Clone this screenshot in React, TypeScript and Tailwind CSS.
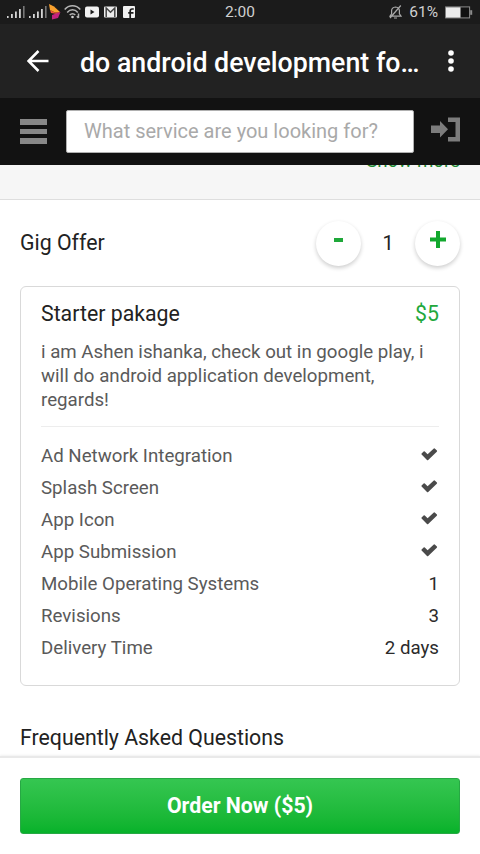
import { JSX } from "react";

interface Feature {
  label: string;
  value?: string;
}

const features: Feature[] = [
  { label: "Ad Network Integration" },
  { label: "Splash Screen" },
  { label: "App Icon" },
  { label: "App Submission" },
  { label: "Mobile Operating Systems", value: "1" },
  { label: "Revisions", value: "3" },
  { label: "Delivery Time", value: "2 days" },
];

const SignalIcon = () => (
  <svg width="18" height="12" viewBox="0 0 18 12" fill="#d4d4d4">
    <rect x="0" y="10" width="1.6" height="2" />
    <rect x="4" y="8" width="1.8" height="4" />
    <rect x="8" y="5.5" width="1.8" height="6.5" />
    <rect x="12" y="3" width="1.8" height="9" />
    <rect x="16" y="0" width="1.6" height="12" opacity="0.5" />
  </svg>
);

const CheckIcon = () => (
  <svg width="17" height="13" viewBox="0 0 17 13" className="-mt-1 mr-px">
    <path
      d="M0.6 5.4 2.6 3.4Q3.2 2.9 3.8 3.5L6.6 6.2 12.8 0.6Q13.4 0.1 14 0.7L15.9 2.6Q16.4 3.2 15.8 3.8L7.2 12.1Q6.6 12.6 6 12L0.6 6.6Q0.1 6 0.6 5.4Z"
      fill="#4a4a4a"
    />
  </svg>
);

const StatusBar = () => (
  <div className="flex h-6 shrink-0 items-center bg-[#1b1b1b] pl-[7px] pr-[7px] text-[#d0d0d0]">
    <div className="flex w-[218px] items-center">
      <SignalIcon />
      <div className="ml-[4px]">
        <SignalIcon />
      </div>
      {/* carrier logo */}
      <svg width="12" height="16" viewBox="0 0 12 16" className="ml-[2px]">
        <path d="M0 0 5 2.5 11 8 6 8.5 1 6Z" fill="#f9a12e" />
        <path d="M1 6 6 8.5 11 8 8 10 2 9Z" fill="#ef5a35" />
        <path d="M11.5 8 9 14 3 15.5 3 11 7 9.5Z" fill="#c2227e" />
      </svg>
      <svg
        width="17"
        height="14"
        viewBox="0 0 17 14"
        fill="none"
        stroke="#b5b5b5"
        strokeWidth="1.5"
        className="ml-[3px]"
      >
        <path d="M0.7 4.6C5 -0.4 12 -0.4 16.3 4.6" />
        <path d="M3.2 7.4C6.2 4 10.8 4 13.8 7.4" />
        <path d="M5.7 10C7.4 8.2 9.6 8.2 11.3 10" />
        <circle cx="8.5" cy="12" r="1.3" fill="#d4d4d4" stroke="none" />
        <path d="M14.5 8.5V13M12.8 11.3 14.5 13" />
      </svg>
      <svg width="14" height="12" viewBox="0 0 14 12" className="ml-[4px]">
        <rect y="0.5" width="14" height="11" rx="2" fill="#f2f2f2" />
        <path d="M5.5 3.6V8.4L9.5 6Z" fill="#1b1b1b" />
      </svg>
      <svg width="13" height="12" viewBox="0 0 13 12" className="ml-[5px]">
        <rect y="0.5" width="13" height="11" rx="1" fill="#ececec" />
        <path
          d="M2.2 11V2L6.5 6.2 10.8 2V11"
          fill="none"
          stroke="#444444"
          strokeWidth="1.5"
        />
      </svg>
      <svg width="12" height="12" viewBox="0 0 12 12" className="ml-[6px]">
        <rect width="12" height="12" rx="1" fill="#f2f2f2" />
        <path
          d="M7.2 12V5.2Q7.2 3 9.2 3H10.8M5.2 6.8H10.5"
          fill="none"
          stroke="#1b1b1b"
          strokeWidth="1.7"
        />
      </svg>
    </div>
    <span className="mt-px text-[15.5px]">2:00</span>
    <div className="ml-auto flex items-center">
      <svg
        width="13"
        height="14"
        viewBox="0 0 13 14"
        fill="none"
        stroke="#aaaaaa"
        strokeWidth="1.2"
      >
        <path d="M1 11.2H12L10.4 8.8V5.6Q10.2 2.4 6.5 2Q2.8 2.4 2.6 5.6V8.8ZM5 13H8M11.8 0.5 1 13" />
      </svg>
      <span className="ml-[7px] mt-px text-[15.5px]">61%</span>
      <svg width="28" height="13" viewBox="0 0 28 13" className="ml-[7px]">
        <rect
          x="0.6"
          y="0.9"
          width="24"
          height="11"
          fill="#111111"
          stroke="#8c8c8c"
        />
        <rect x="1" y="1.3" width="14.5" height="10.3" fill="#ececec" />
        <rect x="25.2" y="4.2" width="2" height="4.6" fill="#8c8c8c" />
      </svg>
    </div>
  </div>
);

const Toolbar = () => (
  <header className="flex h-[74px] shrink-0 items-center bg-[#222222] pl-[27px] pr-[26px] text-white">
    <svg
      width="22"
      height="22"
      viewBox="0 0 22 22"
      fill="none"
      stroke="currentColor"
      strokeWidth="2.5"
    >
      <path d="M21.5 11H2M11.5 1 1.6 11 11.5 21" />
    </svg>
    <h1 className="ml-[31px] mt-[4px] whitespace-nowrap text-[26.75px] font-medium leading-8">
      do android development fo…
    </h1>
    <svg
      width="6"
      height="22"
      viewBox="0 0 6 22"
      fill="currentColor"
      className="ml-auto"
    >
      <circle cx="3" cy="3" r="2.8" />
      <circle cx="3" cy="11" r="2.8" />
      <circle cx="3" cy="19" r="2.8" />
    </svg>
  </header>
);

const SearchBar = () => (
  <div className="flex h-[67px] shrink-0 items-center bg-[#121212] pl-5 pr-5">
    <div className="flex w-[27px] flex-col gap-1">
      <div className="h-1.5 bg-[#888888]" />
      <div className="h-[5px] bg-[#888888]" />
      <div className="h-1.5 bg-[#888888]" />
    </div>
    <div className="-mt-px ml-[19px] flex h-[43px] w-[348px] items-center rounded-xs border border-[#b0b0b0] bg-white pl-[17px] text-[20px] text-[#a9a9a9]">
      What service are you looking for?
    </div>
    <svg
      width="30"
      height="25"
      viewBox="0 0 30 25"
      fill="#7c7c7c"
      className="-mt-1 ml-auto"
    >
      <path d="M1 8.5H10V4L18 12.3 10 20.5V16H1Z" />
      <path d="M18 0.5H30V24.5H18V20H25.5V5H18Z" />
    </svg>
  </div>
);

const GigOffer = () => (
  <section className="px-5">
    <div className="flex h-[86px] items-center text-[#222222]">
      <h2 className="text-[21.3px]">Gig Offer</h2>
      <div className="ml-auto flex items-center">
        <button className="flex size-[45px] items-center justify-center rounded-full bg-white shadow-[0_2px_4px_rgba(0,0,0,0.2)]">
          <span className="mb-[7px] h-1 w-[9px] bg-[#1fa83a]" />
        </button>
        <span className="w-[54px] text-center text-[20px]">1</span>
        <button className="flex size-[45px] items-center justify-center rounded-full bg-white shadow-[0_2px_4px_rgba(0,0,0,0.2)]">
          <svg width="16" height="17" viewBox="0 0 16 17" className="mb-[7px]">
            <path d="M8 0V17M0 8.5H16" stroke="#12a82e" strokeWidth="4" />
          </svg>
        </button>
      </div>
    </div>

    <div className="h-[400px] rounded-md border-[1.5px] border-[#d9d9d9] px-5 pt-[11px]">
      <div className="flex items-center justify-between text-[21.3px] leading-8">
        <h3 className="text-[#222222]">Starter pakage</h3>
        <span className="text-[#22a83c]">$5</span>
      </div>
      <p className="mt-2.5 border-b border-[#ededed] pb-3.5 text-[18.7px] leading-6 text-[#5a5a5a]">
        i am Ashen ishanka, check out in google play, i
        <br />
        will do android application development,
        <br />
        regards!
      </p>
      <ul className="mt-[13px] text-[18.7px] leading-8 text-[#5a5a5a]">
        {features.map((feature) => (
          <li
            key={feature.label}
            className="flex items-center justify-between"
          >
            <span>{feature.label}</span>
            {feature.value ? (
              <span className="text-[#2b2b2b]">{feature.value}</span>
            ) : (
              <CheckIcon />
            )}
          </li>
        ))}
      </ul>
    </div>
  </section>
);

const App = (): JSX.Element => {
  return (
    <div className="flex h-[854px] w-[480px] flex-col overflow-hidden bg-white font-['Roboto',sans-serif]">
      <StatusBar />
      <Toolbar />
      <SearchBar />

      <div className="h-[35px] shrink-0 overflow-hidden border-b border-[#dedede] bg-[#f6f6f6] px-5 text-right">
        <p className="-mt-4 text-[18.7px] leading-6 text-[#1d8a32]">
          Show more
        </p>
      </div>

      <main className="min-h-0 flex-1 overflow-hidden">
        <GigOffer />
        <h2 className="mt-9 px-5 text-[21.3px] leading-8 text-[#222222]">
          Frequently Asked Questions
        </h2>
      </main>

      <footer className="h-[98px] shrink-0 border-t-2 border-[#e9e9e9] bg-white px-5 pt-5 shadow-[0_-1px_2px_rgba(0,0,0,0.06)]">
        <button className="h-14 w-full rounded-[3px] border border-[#27a844] bg-linear-to-b from-[#35c651] to-[#06b22a] text-[21.3px] font-bold text-white">
          Order Now ($5)
        </button>
      </footer>
    </div>
  );
};

export default App;
